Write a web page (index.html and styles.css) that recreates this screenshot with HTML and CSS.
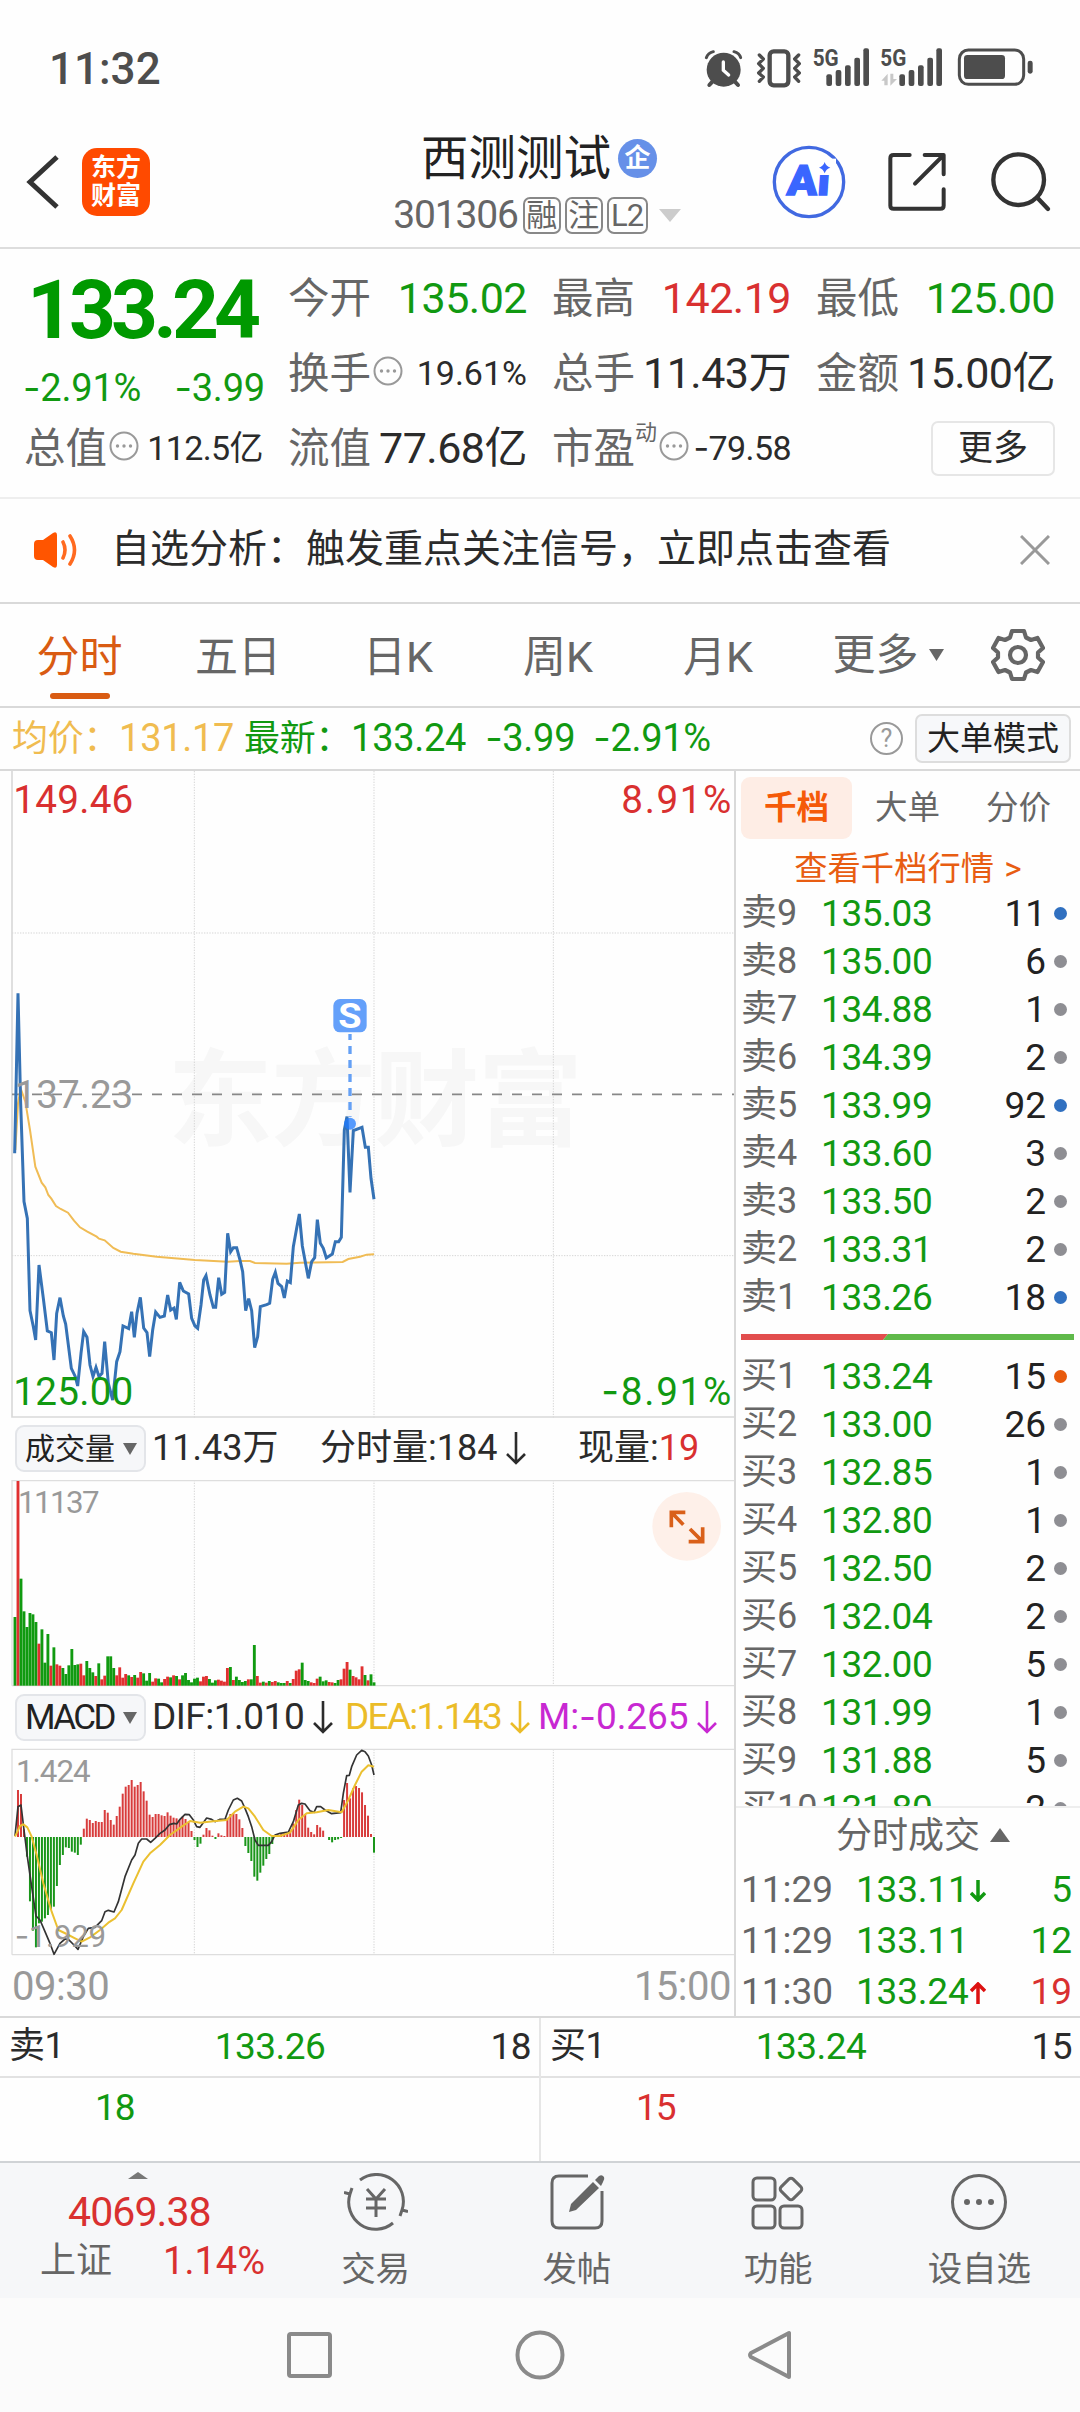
FILE: index.html
```html
<!DOCTYPE html>
<html lang="zh-CN">
<head>
<meta charset="utf-8">
<title>西测测试 301306</title>
<link rel="stylesheet" href="styles.css">
</head>
<body>
<div class="status">
  <span class="clock">11:32</span>
  <svg class="status-icons" viewBox="0 40 1170 150">
    <g fill="#4d4d4d">
      <circle cx="101" cy="120" r="51"/>
      <g fill="none" stroke="#4d4d4d" stroke-width="9" stroke-linecap="round"><path d="M49 84Q54 70 70 66M132 66Q148 70 152 84"/><path stroke-width="12" d="M68 155L58 166M134 155L144 166"/></g>
      <path d="M100 97V122L116 136" fill="none" stroke="#fff" stroke-width="10" stroke-linecap="round"/>
      <rect x="239" y="65" width="56" height="102" rx="12" fill="none" stroke="#4d4d4d" stroke-width="13"/>
      <path d="M208 76L220 88 206 102 220 116 206 130 220 142 208 155M326 76L314 88 328 102 314 116 328 130 314 142 326 155" fill="none" stroke="#4d4d4d" stroke-width="10" stroke-linejoin="round" stroke-linecap="round"/>
      <text x="368" y="110" font-size="74" font-weight="700" textLength="78" lengthAdjust="spacingAndGlyphs">5G</text>
      <text x="571" y="110" font-size="74" font-weight="700" textLength="78" lengthAdjust="spacingAndGlyphs">5G</text>
      <rect x="409" y="134" width="17" height="35" rx="6"/><rect x="437" y="121" width="17" height="48" rx="6"/><rect x="465" y="107" width="17" height="62" rx="6"/><rect x="493" y="84" width="17" height="85" rx="6"/><rect x="520" y="56" width="17" height="113" rx="6"/>
      <rect x="628" y="134" width="17" height="35" rx="6"/><rect x="656" y="121" width="17" height="48" rx="6"/><rect x="684" y="107" width="17" height="62" rx="6"/><rect x="712" y="84" width="17" height="85" rx="6"/><rect x="739" y="56" width="17" height="113" rx="6"/>
      <path d="M574 153L593 132V167H583V153ZM601 132H610V148H621L601 168Z" fill="#c8c8c8"/>
      <rect x="808" y="61" width="193" height="103" rx="27" fill="none" stroke="#4d4d4d" stroke-width="9"/>
      <rect x="822" y="76" width="123" height="72" rx="10"/><rect x="1013" y="93" width="15" height="39" rx="7"/>
    </g>
  </svg>
</div>

<header class="header">
  <div class="head-left">
    <svg class="back" viewBox="0 0 34 56"><path d="M31 3L4 28 31 53" fill="none" stroke="#333" stroke-width="5"/></svg>
    <div class="logo">东方<br>财富</div>
  </div>
  <div class="head-mid">
    <div class="title">西测测试<span class="qi">企</span></div>
    <div class="code"><span>301306</span><i>融</i><i>注</i><i class="l2">L2</i><svg class="tri-code" viewBox="0 0 22 13"><path d="M0 0H22L11 13Z" fill="#ccc"/></svg></div>
  </div>
  <div class="head-right">
    <svg class="ai" viewBox="244 344 222 222"><circle cx="355" cy="455" r="104" fill="#fff" stroke="#4169e1" stroke-width="10"/><g transform="translate(287 495) skewX(-4)"><text font-size="126" font-weight="900" fill="#3a66ff" stroke="#3a66ff" stroke-width="4" textLength="128" lengthAdjust="spacingAndGlyphs">Ai</text></g><rect x="376" y="385" width="60" height="49" fill="#fff"/><path d="M402 395Q406 408 419 412 406 416 402 429 398 416 385 412 398 408 402 395Z" fill="#3a66ff"/></svg>
    <svg class="share" viewBox="590 365 180 180"><path d="M658 374H610Q600 374 600 384V526Q600 535 610 535H750Q760 535 760 526V477M703 374H760V432M757 377L674 460" fill="none" stroke="#333" stroke-width="12" stroke-linecap="round" stroke-linejoin="round"/></svg>
    <svg class="search" viewBox="900 360 186 186"><circle cx="986" cy="446" r="76" fill="none" stroke="#333" stroke-width="13"/><path d="M1042 500L1074 534" stroke="#333" stroke-width="13" stroke-linecap="round"/></svg>
  </div>
</header>

<section class="quote">
  <div class="price-box"><div class="price">133.24</div><div class="change"><span><u>-</u>2.91%</span><span><u>-</u>3.99</span></div></div>
  <div class="cell"><label>今开</label><b class="g">135.02</b></div>
  <div class="cell"><label>最高</label><b class="r">142.19</b></div>
  <div class="cell"><label>最低</label><b class="g">125.00</b></div>
  <div class="cell"><label>换手</label><svg class="dots" viewBox="0 0 30 30"><use href="#more"/></svg><b class="sm">19.61%</b></div>
  <div class="cell"><label>总手</label><b>11.43万</b></div>
  <div class="cell"><label>金额</label><b>15.00亿</b></div>
  <div class="cell"><label>总值</label><svg class="dots" viewBox="0 0 30 30"><g id="more"><circle cx="15" cy="15" r="13.5" fill="none" stroke="#999" stroke-width="2"/><g fill="#999"><circle cx="8.5" cy="15" r="1.7"/><circle cx="15" cy="15" r="1.7"/><circle cx="21.5" cy="15" r="1.7"/></g></g></svg><b class="sm yi">112.5亿</b></div>
  <div class="cell"><label>流值</label><b>77.68亿</b></div>
  <div class="cell"><label>市盈</label><sup>动</sup><svg class="dots" viewBox="0 0 30 30"><use href="#more"/></svg><b class="sm yi"><u>-</u>79.58</b></div>
  <div class="cell end"><span class="more-btn">更多</span></div>
</section>

<section class="notice">
  <svg class="horn" viewBox="0 0 44 36"><path d="M0 12Q0 8 4 8H9L19 1Q23-1 23 3V33Q23 37 19 35L9 28H4Q0 28 0 24Z" fill="#ff5500"/><path d="M29 10Q33 18 29 26M36 4Q45 18 36 32" fill="none" stroke="#ff6a20" stroke-width="3.600" stroke-linecap="round"/></svg>
  <span class="notice-text">自选分析：触发重点关注信号，立即点击查看</span>
  <svg class="close" viewBox="0 0 30 30"><path d="M1 1L29 29M29 1L1 29" stroke="#999" stroke-width="3"/></svg>
</section>

<nav class="tabs">
  <span class="on">分时</span><span>五日</span><span>日K</span><span>周K</span><span>月K</span><span class="tab-more">更多<svg viewBox="0 0 15 12"><path d="M0 0H15L7.500 12Z" fill="#666"/></svg></span>
  <svg class="gear" viewBox="-27 -27 54 54"><g fill="none" stroke="#666" stroke-width="4.200" stroke-linejoin="round"><path d="M-6-24H6L8-17.500 13-15 19.500-17 25-7 20-2.500V2.500L25 7 19.500 17 13 15 8 17.500 6 24H-6L-8 17.500-13 15-19.500 17-25 7-20 2.500V-2.500L-25-7-19.500-17-13-15-8-17.500Z"/><circle r="8"/></g></svg>
</nav>

<section class="info">
  <span class="avg">均价：<em>131.17</em></span><span class="g">最新：<em>133.24</em></span><span class="g n1"><u>-</u>3.99</span><span class="g n2"><u>-</u>2.91%</span>
  <span class="help">?</span><span class="mode">大单模式</span>
</section>

<main class="main">
  <div class="charts">
    <svg class="chart-price" viewBox="0 -567 2202 1944">
      <text class="wm" x="503" y="530" textLength="1245">东方财富</text>
      <g class="grid"><path d="M583-567V1374M1122-567V1374M1660-567V1374M36-81H2202M36 887H2202"/></g>
      <path d="M36-567V1371H2202" fill="none" stroke="#d9d9d9" stroke-width="5"/>
      <path d="M36 403H2202" stroke="#888" stroke-width="5" stroke-dasharray="30 30"/>
      <polyline id="avg-line" fill="none" stroke="#f0bc55" stroke-width="6"/>
      <polyline id="price-line" fill="none" stroke="#3572b5" stroke-width="9"/>
      <circle cx="1050" cy="491" r="18" fill="#1f7bff" fill-opacity=".75"/>
      <path d="M1050 222V470" stroke="#64a0f5" stroke-width="10" stroke-dasharray="24 18" stroke-dashoffset="6"/>
      <rect x="1000" y="117" width="100" height="100" rx="20" fill="#64a0fa"/>
      <text x="1015" y="204" font-size="104" font-weight="700" fill="#fff" textLength="70" lengthAdjust="spacingAndGlyphs">S</text>
      <text class="lbl r" x="40" y="-440" textLength="360">149.46</text>
      <text class="lbl r" x="1864" y="-440" textLength="330">8.91%</text>
      <text class="lbl n" x="44" y="444" textLength="356">137.23</text>
      <text class="lbl g" x="40" y="1336" textLength="360">125.00</text>
      <text class="lbl g" x="1804" y="1336" textLength="390"><tspan class="minus">-</tspan>8.91%</text>
    </svg>
    <div class="ind-head vol-head">
      <span class="pick">成交量<svg viewBox="0 0 14 12"><path d="M0 0H14L7 12Z" fill="#666"/></svg></span>
      <span>11.43万</span><span>分时量:184<svg class="arr" viewBox="0 0 20 33"><path d="M10 0V31M1 22L10 31 19 22"/></svg></span><span>现量:<em class="r">19</em></span>
    </div>
    <svg class="chart-sub" viewBox="0 0 2202 624">
      <g class="grid"><path d="M583 0V617M1122 0V617M1660 0V617"/></g>
      <path d="M36 617V2H2202M36 617H2202" fill="none" stroke="#dedede" stroke-width="4"/>
      <text class="lbl n" x="54" y="98" font-size="94" textLength="245">11137</text>
      <g id="vol-bars"></g>
      <circle cx="2060" cy="139" r="103" fill="#fef0e9"/>
      <path d="M2056 97H2014V142M2014 97L2050 134M2066 185H2108V142M2108 185L2070 147" fill="none" stroke="#d9601a" stroke-width="11"/>
    </svg>
    <div class="ind-head macd-head">
      <span class="pick">MACD<svg viewBox="0 0 14 12"><path d="M0 0H14L7 12Z" fill="#666"/></svg></span>
      <span class="dif">DIF:1.010<svg class="arr" viewBox="0 0 20 33"><path d="M10 0V31M1 22L10 31 19 22"/></svg></span><span class="dea">DEA:1.143<svg class="arr" viewBox="0 0 20 33"><path d="M10 0V31M1 22L10 31 19 22"/></svg></span><span class="m">M:<u>-</u>0.265<svg class="arr" viewBox="0 0 20 33"><path d="M10 0V31M1 22L10 31 19 22"/></svg></span>
    </div>
    <svg class="chart-sub" viewBox="0 804 2202 624">
      <g class="grid"><path d="M583 808V1424M1122 808V1424M1660 808V1424"/></g>
      <path d="M36 1424V808H2202M36 1424H2202" fill="none" stroke="#dedede" stroke-width="4"/>
      <g id="macd-bars"></g>
      <polyline id="dif-line" fill="none" stroke="#333" stroke-width="5" stroke-linejoin="round"/>
      <polyline id="dea-line" fill="none" stroke="#ebc030" stroke-width="6" stroke-linejoin="round"/>
      <text class="lbl n" x="48" y="906" font-size="94" textLength="224">1.424</text>
      <text class="lbl n" x="44" y="1400" font-size="94" textLength="274"><tspan class="minus">-</tspan>1.929</text>
    </svg>
    <div class="times"><span>09:30</span><span>15:00</span></div>
  </div>

  <aside class="book">
    <div class="book-tabs"><span class="on">千档</span><span>大单</span><span>分价</span></div>
    <div class="book-link">查看千档行情 &gt;</div>
    <div class="levels">
      <div class="lv b"><span>卖9</span><b>135.03</b><i>11</i></div>
      <div class="lv"><span>卖8</span><b>135.00</b><i>6</i></div>
      <div class="lv"><span>卖7</span><b>134.88</b><i>1</i></div>
      <div class="lv"><span>卖6</span><b>134.39</b><i>2</i></div>
      <div class="lv b"><span>卖5</span><b>133.99</b><i>92</i></div>
      <div class="lv"><span>卖4</span><b>133.60</b><i>3</i></div>
      <div class="lv"><span>卖3</span><b>133.50</b><i>2</i></div>
      <div class="lv"><span>卖2</span><b>133.31</b><i>2</i></div>
      <div class="lv b"><span>卖1</span><b>133.26</b><i>18</i></div>
    </div>
    <svg class="ratio" viewBox="0 0 333 6"><path d="M0 0H147L142 6H0Z" fill="#e24d4d"/><path d="M147 0H333V6H142Z" fill="#5fb94a"/></svg>
    <div class="levels bids">
      <div class="lv o"><span>买1</span><b>133.24</b><i>15</i></div>
      <div class="lv"><span>买2</span><b>133.00</b><i>26</i></div>
      <div class="lv"><span>买3</span><b>132.85</b><i>1</i></div>
      <div class="lv"><span>买4</span><b>132.80</b><i>1</i></div>
      <div class="lv"><span>买5</span><b>132.50</b><i>2</i></div>
      <div class="lv"><span>买6</span><b>132.04</b><i>2</i></div>
      <div class="lv"><span>买7</span><b>132.00</b><i>5</i></div>
      <div class="lv"><span>买8</span><b>131.99</b><i>1</i></div>
      <div class="lv"><span>买9</span><b>131.88</b><i>5</i></div>
      <div class="lv"><span>买10</span><b>131.80</b><i>2</i></div>
    </div>
    <div class="deals-head">分时成交<svg viewBox="0 0 20 14"><path d="M0 14L10 0 20 14Z" fill="#666"/></svg></div>
    <div class="deal"><span>11:29</span><b>133.11</b><svg viewBox="0 0 16 22"><path d="M8 0V20M1 13L8 20 15 13" stroke="#119911"/></svg><i class="g">5</i></div>
    <div class="deal"><span>11:29</span><b>133.11</b><s></s><i class="g">12</i></div>
    <div class="deal"><span>11:30</span><b>133.24</b><svg viewBox="0 0 16 22"><path d="M8 22V2M1 9L8 2 15 9" stroke="#dd1111"/></svg><i class="r">19</i></div>
  </aside>
</main>

<section class="best">
  <div class="side"><div class="top"><span>卖1</span><b>133.26</b><i>18</i></div><div class="queue g">18</div></div>
  <div class="side"><div class="top"><span>买1</span><b>133.24</b><i>15</i></div><div class="queue r">15</div></div>
</section>

<footer class="toolbar">
  <div class="index"><svg viewBox="0 0 20 7"><path d="M0 7L10 0 20 7Z" fill="#777"/></svg><div class="idx">4069.38</div><div class="idx2"><span>上证</span><em>1.14%</em></div></div>
  <div class="tool"><svg viewBox="-32 -29 64 58"><g fill="none" stroke="#666" stroke-width="3"><path d="M-16-22A27 27 0 0 1 26 8L24 14M26 8L32 9.500M17 21A27 27 0 0 1-26-8L-24-14M-26-8L-32-9.500"/><path d="M-9-13L0-3 9-13M0-3V15M-10-3H10M-10 6H10"/></g></svg>交易</div>
  <div class="tool"><svg viewBox="-32 -29 64 58"><path d="M11-26H-18Q-25-26-25-19V19Q-25 26-18 26H18Q25 26 25 19V-11" fill="none" stroke="#666" stroke-width="3"/><path d="M16-20L22-14-1 8-8 10-6 2ZM18-22L22-26Q25-28 27-25 28-23 26-20L24-16Z" fill="#666"/></svg>发帖</div>
  <div class="tool"><svg viewBox="-32 -29 64 58"><g fill="none" stroke="#666" stroke-width="3"><rect x="-25" y="-24" width="22" height="22" rx="4"/><rect x="-25" y="4" width="22" height="22" rx="4"/><rect x="2" y="4" width="22" height="22" rx="4"/><rect x="4.500" y="-21.500" width="17" height="17" rx="3" transform="rotate(45 13 -13)"/></g></svg>功能</div>
  <div class="tool"><svg viewBox="-32 -29 64 58"><circle r="26.500" fill="none" stroke="#666" stroke-width="3"/><g fill="#666"><circle cx="-12" r="3"/><circle r="3"/><circle cx="12" r="3"/></g></svg>设自选</div>
</footer>
<div class="sysnav">
  <svg viewBox="0 0 50 50"><rect x="5" y="4" width="41" height="42" rx="2" fill="none" stroke="#8a8a8a" stroke-width="4"/></svg>
  <svg viewBox="0 0 50 50"><circle cx="25" cy="25" r="22.500" fill="none" stroke="#8a8a8a" stroke-width="4"/></svg>
  <svg viewBox="0 0 50 50"><path d="M43 3V47L5 27Q3 25 5 23Z" fill="none" stroke="#8a8a8a" stroke-width="4" stroke-linejoin="round"/></svg>
</div>
<script src="charts.js"></script>
</body>
</html>
```
FILE: styles.css
```css
* { box-sizing: border-box; }
body {
  margin: 0;
  width: 1080px;
  height: 2412px;
  display: flex;
  flex-direction: column;
  overflow: hidden;
  background: #fefefe;
  color: #2b2b2b;
  font-family: Roboto, "Noto Sans CJK SC", sans-serif;
  line-height: 1.2;
}
svg { display: block; flex: none; }
svg text { font-family: Roboto, "Noto Sans CJK SC", sans-serif; }
i, em { font-style: normal; }
b { font-weight: 400; }
s, u { text-decoration: none; }
/* wide minus sign before signed figures */
u, svg .minus { font-family: Inter, Roboto, sans-serif; }
.g { color: #119911; fill: #119911; }
.r { color: #d93030; fill: #d93030; }
.n { fill: #999; }

.status { height: 88px; flex: none; display: flex; justify-content: space-between; padding-left: 49px; }
.clock { font-size: 44px; line-height: 50px; margin-top: 44px; font-weight: 500; color: #4d4d4d; }
.status-icons { width: 390px; height: 50px; margin-top: 43px; }

.header { height: 161px; flex: none; display: grid; grid-template-columns: 1fr auto 1fr; align-items: center; padding: 28px 28px 0 26px; border-bottom: 2px solid #ddd; }
.head-left { display: flex; align-items: center; gap: 22px; }
.back { width: 34px; height: 56px; }
.logo { width: 68px; height: 68px; border-radius: 15px; background: #ff4a00; color: #fff; font-weight: 700; font-size: 25px; line-height: 28px; text-align: center; padding-top: 6px; }
.head-mid { display: flex; flex-direction: column; align-items: center; gap: 9px; padding-top: 3px; }
.title { display: flex; align-items: center; gap: 7px; font-size: 47.500px; line-height: 56px; color: #222; }
.qi { width: 39px; height: 39px; border-radius: 50%; background: #6690e8; color: #fff; font-size: 26px; font-weight: 700; line-height: 38px; text-align: center; }
.code { display: flex; align-items: center; height: 40px; font-size: 39px; color: #666; margin-left: -4px; }
.code span { letter-spacing: -1.200px; margin-right: 5px; }
.code i { width: 38px; height: 37px; border: 2px solid #888; border-radius: 7px; font-size: 31px; line-height: 33px; text-align: center; margin-right: 4px; display: flex; justify-content: center; }
.code .l2 { width: 41px; margin-right: 11px; letter-spacing: -1px; }
.tri-code { width: 22px; height: 13px; }
.head-right { display: flex; align-items: center; justify-content: flex-end; }
.ai { width: 74px; height: 74px; margin-right: 41px; }
.share { width: 60px; height: 60px; margin-right: 43px; }
.search { width: 62px; height: 62px; }

.quote { height: 250px; flex: none; display: grid; grid-template-columns: repeat(4, 238px); grid-template-rows: repeat(3, 75px); column-gap: 26px; padding: 12px 25px 0; border-bottom: 2px solid #eee; }
.price-box { grid-row: span 2; color: #009900; }
.price { font-size: 82px; line-height: 99px; font-weight: 700; letter-spacing: -5px; padding-left: 2px; }
.change { display: flex; justify-content: space-between; font-size: 38px; line-height: 54px; color: #119911; letter-spacing: -0.200px; margin-right: -2px; margin-left: -2px; }
.cell { display: flex; align-items: center; white-space: nowrap; }
.cell label { font-size: 41.500px; color: #666; margin-left: -1px; }
.cell b { margin-left: auto; font-size: 43px; letter-spacing: -0.500px; }
.cell .sm { font-size: 34px; letter-spacing: 0; }
.cell .yi { letter-spacing: -0.600px; }
.cell sup { font-size: 22px; color: #666; align-self: flex-start; line-height: 24px; margin-top: 10px; vertical-align: baseline; }
.dots { width: 30px; height: 30px; margin-left: 2px; margin-bottom: 5px; }
.end { justify-content: flex-end; }
.more-btn { width: 124px; height: 55px; border: 2px solid #e6e6e6; border-radius: 7px; font-size: 35px; line-height: 51px; text-align: center; }

.notice { height: 105px; flex: none; display: flex; align-items: center; padding: 0 30px 2px 34px; border-bottom: 2px solid #d9d9d9; }
.horn { width: 44px; height: 36px; }
.notice-text { font-size: 39px; margin-left: 33px; white-space: nowrap; }
.close { width: 30px; height: 30px; margin-left: auto; }

.tabs { height: 104px; flex: none; display: grid; grid-template-columns: repeat(6, 160px) 1fr; align-items: center; border-bottom: 2px solid #d9d9d9; font-size: 43px; color: #666; text-align: center; }
.tabs span { height: 102px; line-height: 106px; padding-right: 4px; }
.tabs .on { color: #d95b12; display: flex; flex-direction: column; align-items: center; padding-right: 1px; }
.tabs .on::after { content: ""; width: 60px; height: 6px; flex: none; margin-top: -17px; border-radius: 3px; background: #d95b12; }
.tabs .tab-more { display: flex; align-items: center; justify-content: center; gap: 10px; padding: 0 0 0 16px; }
.tab-more svg { width: 15px; height: 12px; }
.gear { width: 54px; height: 54px; margin-left: 31px; }

.info { height: 63px; flex: none; display: flex; align-items: center; padding: 0 9px 0 12px; border-bottom: 2px solid #d9d9d9; font-size: 36px; white-space: nowrap; }
.info em { font-size: 38px; }
.avg { color: #f0bc50; width: 232px; letter-spacing: -0.300px; }
.info .g { letter-spacing: -0.300px; }
.info .n1, .info .n2 { font-size: 38px; }
.info .n1 { margin-left: 19px; }
.info .n2 { margin-left: 18px; }
.help { margin-left: auto; width: 33px; height: 33px; border: 2px solid #999; border-radius: 50%; color: #999; font-size: 25px; line-height: 30px; text-align: center; }
.mode { width: 156px; height: 49px; margin-left: 12px; border: 2px solid #ddd; border-radius: 7px; background: #f7f8fa; font-size: 33px; line-height: 46px; text-align: center; color: #222; }

.main { height: 1247px; flex: none; display: grid; grid-template-columns: 734px 346px; border-bottom: 2px solid #d9d9d9; }
.chart-price { width: 734px; height: 648px; }
.chart-sub { width: 734px; height: 208px; }
.grid { fill: none; stroke: #d5d5d5; stroke-width: 3; stroke-dasharray: 4 4; }
.wm { font-size: 315px; font-weight: 700; fill: #f7f7f7; }
.lbl { font-size: 116px; }
.lbl[font-size] { font-size: 94px; }
.ind-head { display: grid; align-items: center; column-gap: 6px; padding-left: 15px; font-size: 36px; white-space: nowrap; }
.ind-head > span { display: flex; align-items: center; }
.vol-head { height: 61px; grid-template-columns: 131px 162px 252px 1fr; padding-bottom: 2px; }
.macd-head { height: 60px; grid-template-columns: 131px 187px 187px 1fr; font-size: 37px; padding-bottom: 1px; }
.ind-head .pick { height: 47px; border: 2px solid #e3e5e9; border-radius: 9px; background: #f6f7f9; font-size: 30px; padding-left: 8px; justify-content: space-between; padding-right: 7px; color: #222; }
.macd-head .pick { font-size: 35px; letter-spacing: -2.600px; }
.pick svg { width: 14px; height: 12px; }
.arr { width: 20px; height: 33px; margin-left: 9px; fill: none; stroke: currentColor; stroke-width: 2.600; }
.dif { letter-spacing: -0.500px; }
.dea { color: #ebbc28; letter-spacing: -1.700px; }
.m { color: #c828d2; letter-spacing: -0.100px; }
.times { height: 61px; display: flex; justify-content: space-between; align-items: center; padding: 0 3px 0 12px; font-size: 40px; letter-spacing: -0.500px; color: #999; }

.book { border-left: 2px solid #d9d9d9; height: 1245px; overflow: hidden; }
.book-tabs { display: grid; grid-template-columns: repeat(3, 111px); padding: 6px 0 0 5px; height: 66px; font-size: 32.500px; line-height: 62px; color: #666; text-align: center; }
.book-tabs .on { background: #feede5; border-radius: 9px; color: #f55a08; font-weight: 700; }
.book-link { height: 53px; line-height: 63px; text-align: center; font-size: 33.300px; word-spacing: 2px; color: #e85d12; }
.lv { height: 48px; display: grid; grid-template-columns: 79px 131px 1fr 13px; align-items: center; padding: 0 13px 0 5px; font-size: 37px; white-space: nowrap; }
.lv span { color: #666; font-size: 36px; }
.lv b { color: #119911; letter-spacing: -0.400px; padding-left: 1px; }
.lv i { text-align: right; padding-right: 8px; color: #222; }
.lv::after { content: ""; width: 13px; height: 13px; border-radius: 50%; background: #8e8e93; margin-bottom: 2px; }
.lv.b::after { background: #3070c0; }
.lv.o::after { background: #e85a0c; }
.ratio { width: 333px; height: 6px; margin: 12px 0 13px 5px; }
.bids { height: 455px; overflow: hidden; border-bottom: 2px solid #eee; }
.deals-head { height: 57px; display: flex; align-items: center; justify-content: center; gap: 10px; font-size: 36px; color: #666; padding-left: 30px; }
.deals-head svg { width: 20px; height: 14px; margin-bottom: 4px; }
.deal { height: 51px; display: grid; grid-template-columns: 115px 114px 16px 1fr; align-items: center; padding: 0 8px 0 5px; font-size: 37px; }
.deal span { color: #666; }
.deal b { color: #119911; letter-spacing: -0.200px; }
.deal svg { width: 16px; height: 22px; fill: none; stroke-width: 3.500; }
.deal i { text-align: right; }

.best { height: 145px; flex: none; display: grid; grid-template-columns: 539px 541px; border-bottom: 2px solid #d0d3d6; font-size: 37px; }
.side + .side { border-left: 2px solid #e6e6e6; }
.top { height: 60px; border-bottom: 2px solid #e2e2e2; display: grid; grid-template-columns: 1fr 1fr 1fr; align-items: center; padding: 0 8px 0 9px; letter-spacing: -0.500px; }
.top span { font-size: 36px; }
.top b { color: #119911; text-align: center; }
.top i { text-align: right; }
.queue { padding-left: 95px; line-height: 60px; letter-spacing: -1px; }

.toolbar { height: 135px; flex: none; display: grid; grid-template-columns: 275px repeat(4, 201.250px); background: #f6f7f9; color: #666; }
.index { padding-top: 9px; }
.index svg { width: 20px; height: 7px; margin-left: 128px; }
.idx { color: #d93030; font-size: 41px; line-height: 48px; margin-top: 9px; padding-left: 68px; letter-spacing: -0.900px; }
.idx2 { display: flex; justify-content: space-between; padding: 0 10px 0 40px; font-size: 36px; line-height: 51px; }
.idx2 em { color: #d93030; font-size: 38px; }
.tool { display: flex; flex-direction: column; align-items: center; font-size: 34.500px; line-height: 50px; padding-top: 10px; }
.tool svg { width: 64px; height: 58px; margin-bottom: 13px; }
.sysnav { height: 114px; flex: none; background: #fbfbfb; display: flex; justify-content: center; gap: 181px; padding-top: 32px; }
.sysnav svg { width: 50px; height: 50px; }
```
FILE: charts.js
```js
const STEP = 8.975;
const X0 = 45;
const NS = "http://www.w3.org/2000/svg";

const price = "44,580 54,100 62,430 72,725 82,775 90,1052 100,1100 107,1140 117,915 130,1015 142,1113 154,1118 162,1200 170,1060 180,1013 190,1068 197,1092 214,1225 226,1250 233,1278 243,1180 251,1115 261,1132 270,1215 279,1250 288,1222 297,1250 306,1240 314,1145 325,1270 338,1320 350,1205 360,1175 369,1098 386,1106 395,1055 403,1132 411,1060 421,1012 431,1104 441,1118 449,1190 458,1110 467,1056 480,1072 493,1068 503,1005 512,1050 522,1044 529,1078 539,967 550,993 566,1002 575,1075 585,1098 593,1105 603,1035 611,960 618,947 630,1005 640,1042 647,1042 656,953 665,1003 674,997 683,820 692,875 700,863 710,863 720,900 728,935 737,1052 746,1016 755,1052 764,1163 773,1130 781,1040 800,1034 809,1030 818,958 826,937 834,970 845,980 853,1014 862,963 871,968 880,860 890,805 898,762 907,858 925,955 935,905 944,893 952,779 961,850 970,865 979,894 997,882 1006,845 1016,845 1024,832 1033,510 1041,470 1050,697 1060,512 1086,502 1096,562 1105,562 1113,655 1122,718";
const average = "46,570 54,430 62,385 76,425 90,510 106,620 125,668 136,682 145,705 154,716 168,738 182,747 204,758 222,782 240,802 262,815 290,830 297,836 314,841 340,864 362,875 400,881 470,890 585,900 683,905 720,903 750,903 765,909 860,911 900,908 1028,906 1045,897 1080,890 1100,884 1122,883";
const dif = "45,1068 54,980 63,975 72,1050 82,1130 95,1220 108,1308 120,1320 135,1355 150,1390 162,1423 180,1390 195,1377 205,1378 222,1395 234,1408 250,1370 265,1345 285,1342 305,1322 315,1295 325,1291 342,1296 355,1265 375,1190 395,1140 405,1125 415,1090 425,1077 440,1077 452,1087 465,1075 480,1060 495,1050 508,1034 522,1030 530,1032 540,1018 555,1003 568,1004 580,1020 590,1040 600,1042 620,1014 635,1018 645,1025 660,1018 675,1018 685,990 700,960 712,955 725,963 735,985 745,1010 755,1040 765,1080 775,1096 805,1096 815,1085 825,1065 840,1060 865,1056 880,1025 895,975 905,970 915,972 930,992 942,997 950,980 962,980 975,990 995,1001 1022,998 1030,940 1040,887 1048,886 1055,860 1070,825 1085,811 1095,815 1105,828 1115,855 1122,885";
const dea = "45,1070 60,1038 70,1033 82,1042 95,1070 110,1125 130,1210 155,1295 175,1350 200,1362 225,1375 245,1385 270,1372 300,1350 325,1328 345,1315 365,1290 400,1210 430,1145 450,1120 480,1095 510,1065 545,1040 570,1023 600,1028 640,1024 680,1020 705,995 730,980 745,985 765,1010 790,1050 815,1068 840,1068 870,1058 895,1020 920,1000 950,997 985,990 1025,997 1045,960 1065,915 1085,875 1105,856 1122,860";

const volume = "g411 r3 g296 g394 g441 g399 g403 g426 r491 g448 g548 g462 r557 g502 r553 r557 g564 g582 g556 g507 g555 g553 r551 r586 g543 g564 g577 r588 g550 r598 r587 g529 g529 g564 r586 r562 r593 r582 g586 r591 g585 r593 r576 g580 g602 g579 r605 r595 g596 g607 r597 r590 g592 r586 g588 r598 g586 g579 g600 g607 g596 g593 r604 r590 r588 g597 g608 g601 r599 r602 r605 r564 g561 r600 g590 g600 g606 g603 r598 g598 g495 r588 r608 g605 r608 g603 r606 r603 g607 g609 g609 r603 g609 r597 r572 r568 g548 g600 g603 r607 r609 r596 g590 g604 g601 r606 r607 g609 g600 r598 r566 r546 g569 r588 r592 r598 r559 g585 r601 g583 g607".split(" ");
const hist = [1071,930,942,1048,1130,1264,1352,1402,1330,1325,1315,1305,1290,1280,1218,1155,1125,1102,1104,1115,1118,1125,1094,1046,1016,1020,1029,1023,1026,1026,990,998,1020,1034,1008,980,941,920,915,900,920,915,906,934,962,1004,1011,1002,1002,1006,1008,997,1007,1013,1015,1020,1010,1017,1026,1053,1080,1101,1091,1064,1044,1051,1067,1077,1060,1066,1068,1014,1002,1000,1002,1018,1044,1098,1119,1143,1190,1202,1178,1157,1137,1122,1092,1070,1064,1060,1058,1060,1052,1030,990,959,975,1002,1043,1056,1063,1035,1042,1052,1071,1080,1087,1080,1078,1074,960,909,955,925,918,924,937,975,1007,1062,1118];

function bar(parent, i, from, to, width, color) {
  const r = document.createElementNS(NS, "rect");
  r.setAttribute("x", X0 + STEP * i - width / 2);
  r.setAttribute("y", Math.min(from, to));
  r.setAttribute("width", width);
  r.setAttribute("height", Math.abs(to - from));
  r.setAttribute("fill", color);
  parent.appendChild(r);
}

for (const [id, pts] of [["price-line", price], ["avg-line", average], ["dif-line", dif], ["dea-line", dea]]) {
  document.getElementById(id).setAttribute("points", pts);
}
const volBars = document.getElementById("vol-bars");
volume.forEach((v, i) => bar(volBars, i, Number(v.slice(1)), 617, 8.6, v[0] === "r" ? "#e03030" : "#109a10"));
const macdBars = document.getElementById("macd-bars");
hist.forEach((y, i) => bar(macdBars, i, y, 1071, 6, y < 1071 ? "#d83c3c" : "#1a961a"));
```
